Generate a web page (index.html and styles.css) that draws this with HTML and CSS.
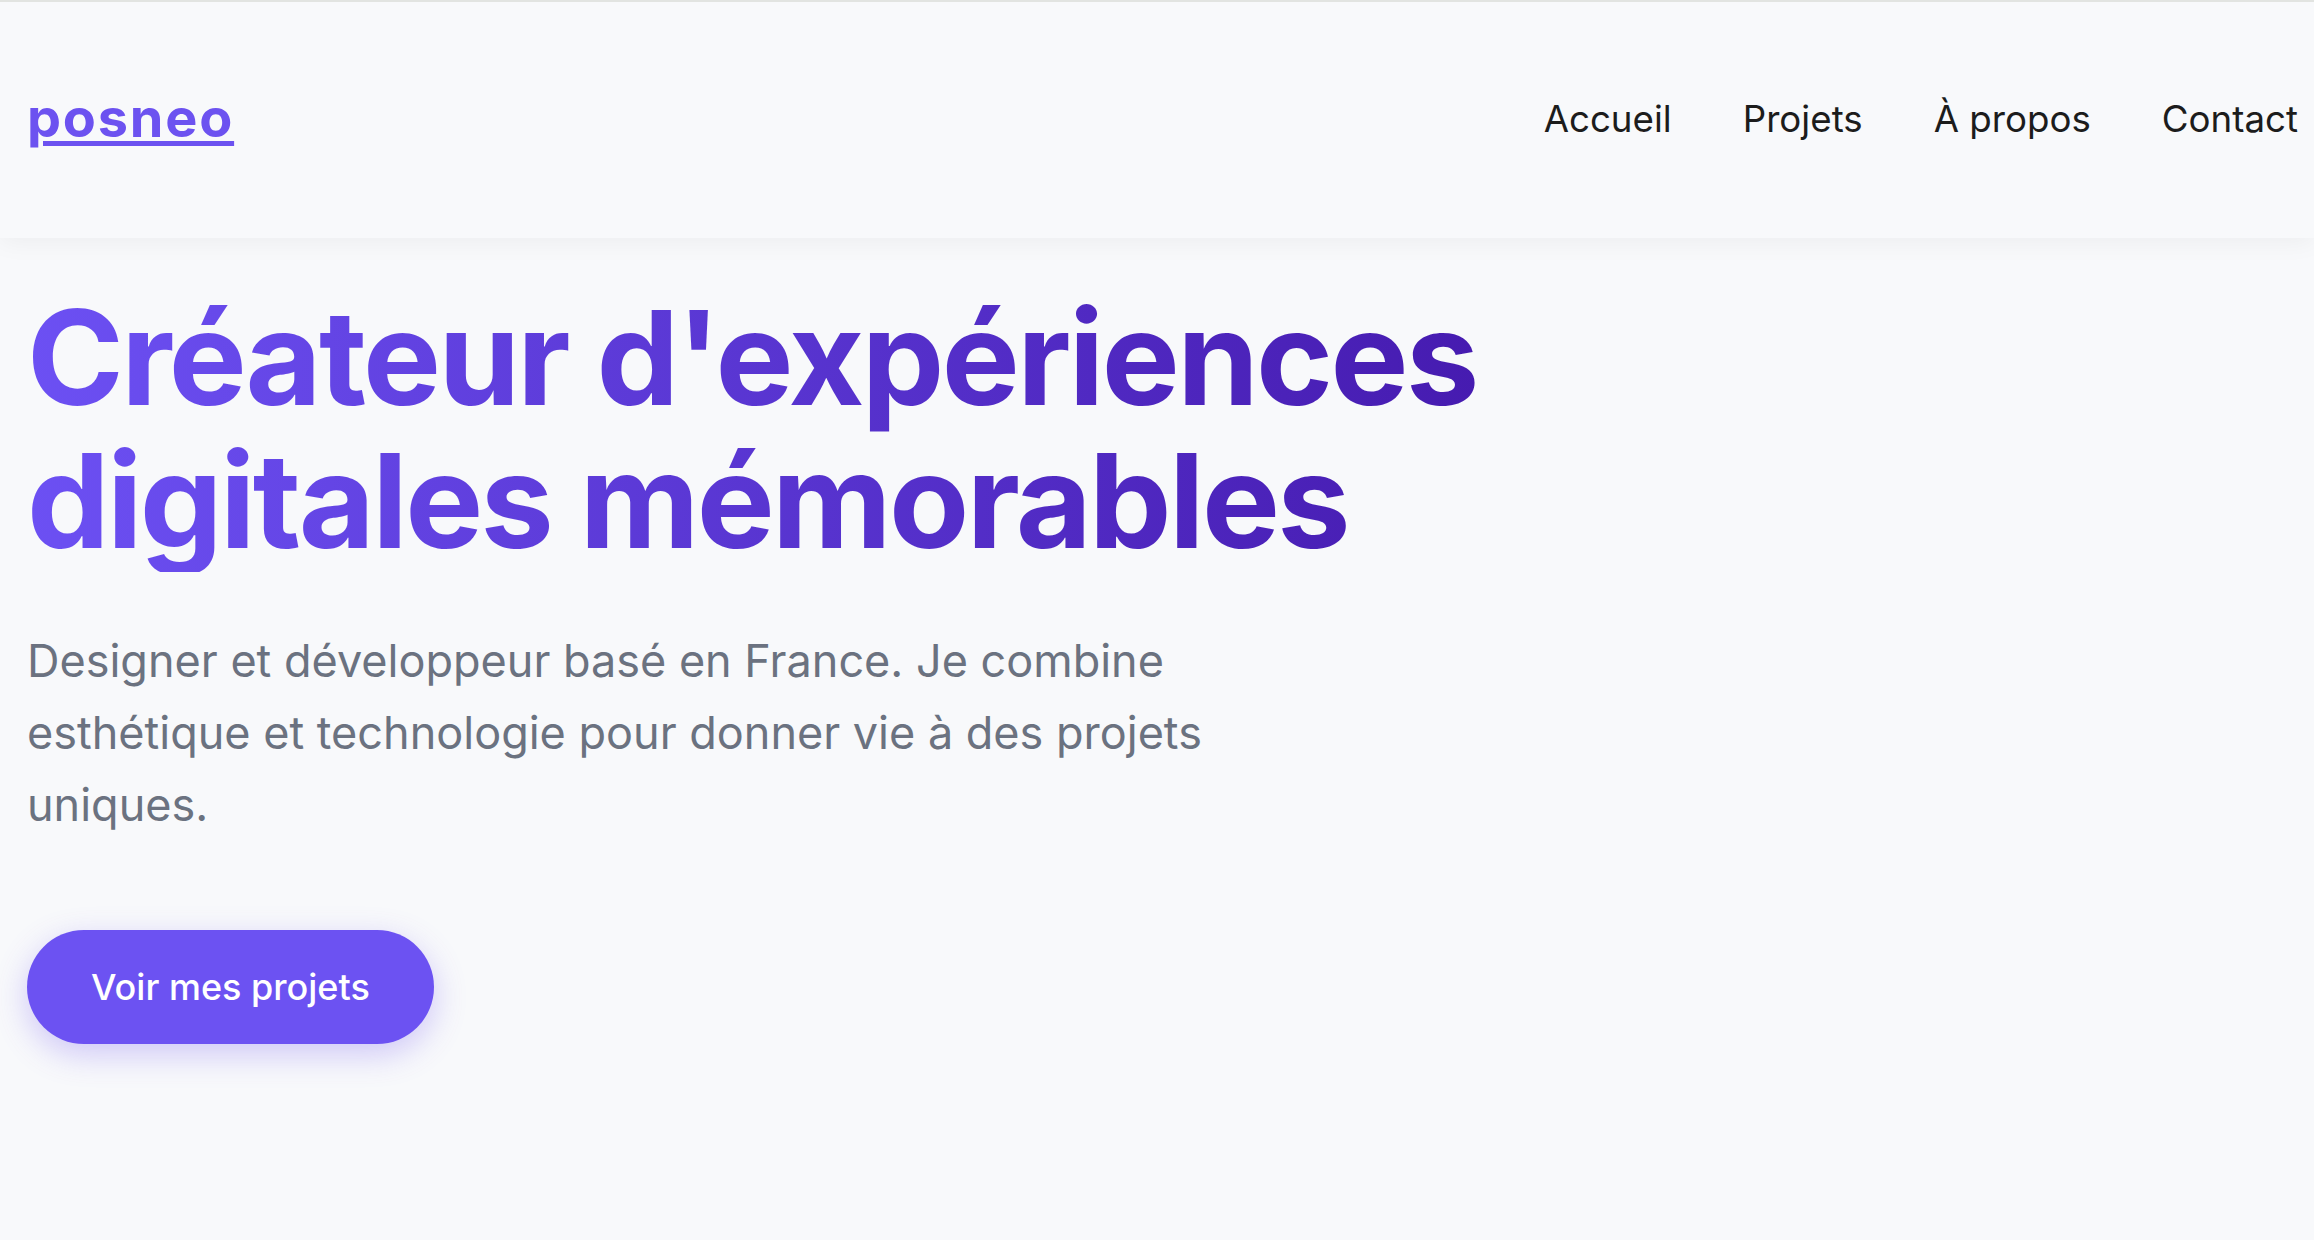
FILE: index.html
```html
<!DOCTYPE html>
<html lang="fr">
<head>
<meta charset="utf-8">
<title>posneo</title>
<link rel="stylesheet" href="styles.css">
</head>
<body>
<header class="site-header">
  <a class="logo" href="#">posneo</a>
  <nav class="main-nav">
    <a class="nav-link" href="#">Accueil</a>
    <a class="nav-link" href="#">Projets</a>
    <a class="nav-link" href="#">À propos</a>
    <a class="nav-link" href="#">Contact</a>
  </nav>
</header>
<main class="hero">
  <h1 class="hero-title">Créateur d'expériences digitales mémorables</h1>
  <p class="hero-text">Designer et développeur basé en France. Je combine esthétique et technologie pour donner vie à des projets uniques.</p>
  <a class="btn-primary" href="#">Voir mes projets</a>
</main>
</body>
</html>
```
FILE: styles.css
```css
* { box-sizing: border-box; }
html, body { margin: 0; padding: 0; }
body {
  background: #f8f9fb;
  font-family: Inter, "Noto Sans", "Liberation Sans", sans-serif;
  color: #1f1f1f;
  min-height: 1240px;
}
.site-header {
  display: flex;
  align-items: center;
  justify-content: space-between;
  height: 238px;
  border-top: 2px solid #e2e4e1;
  padding: 0 16px 0 27px;
  background: #f8f9fb;
  box-shadow: 0 4px 24px rgba(0, 0, 0, 0.05);
  position: relative;
  z-index: 1;
}
.logo {
  font-size: 54px;
  font-weight: 700;
  letter-spacing: 1.8px;
  color: #6c52f0;
  text-decoration: underline;
  text-decoration-thickness: 5px;
  text-underline-offset: 4px;
  line-height: 1;
  margin-bottom: 5px;
}
.main-nav {
  display: flex;
  gap: 71px;
  margin-bottom: 4px;
}
.nav-link {
  font-size: 36.7px;
  font-weight: 400;
  color: #1c1c1c;
  text-decoration: none;
}
.hero {
  padding: 48px 16px 0 27px;
}
.hero-title {
  margin: 0 0 53px;
  max-width: 1560px;
  font-size: 131px;
  line-height: 143px;
  font-weight: 700;
  letter-spacing: -0.02em;
  background: linear-gradient(90deg, #6c50f3 0%, #4317ab 100%);
  -webkit-background-clip: text;
  background-clip: text;
  -webkit-text-fill-color: transparent;
  color: transparent;
}
.hero-text {
  margin: 0 0 89px;
  max-width: 1250px;
  font-size: 45px;
  line-height: 72px;
  color: #6b7280;
}
.btn-primary {
  display: inline-block;
  padding: 28px 64px;
  line-height: 58px;
  font-size: 36px;
  font-weight: 500;
  color: #ffffff;
  background: #6c52f2;
  border-radius: 999px;
  text-decoration: none;
  box-shadow: 0 10px 32px rgba(108, 82, 242, 0.3);
}
```
